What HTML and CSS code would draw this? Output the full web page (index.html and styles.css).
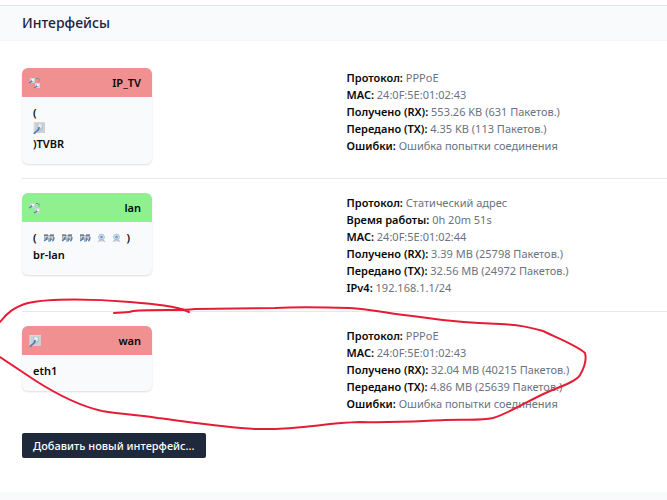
FILE: index.html
```
<!DOCTYPE html>
<html lang="ru">
<head>
<meta charset="utf-8">
<title>Интерфейсы</title>
<link rel="stylesheet" href="styles.css">
</head>
<body>
<svg class="defs" aria-hidden="true">
  <symbol id="port" viewBox="0 0 12 12">
    <rect x="1" y="0" width="11" height="11" fill="#ccd0d4"/>
    <path d="M1 11V0H12" fill="none" stroke="#dfe2e4"/>
    <path d="M4 2h6v5l-2 2H6L4 7z" fill="#bcc5ce"/>
    <circle cx="7" cy="4" r="2" fill="#e6edf4"/>
    <path d="M6 5Q6 8 4 9T1 12" fill="none" stroke="#4d7fb8" stroke-width="1.8"/>
  </symbol>
  <symbol id="bridge" viewBox="0 0 12 12">
    <path d="M1 1h5v5H1z" fill="#cfd2da"/>
    <path d="M6 6h5v5H6z" fill="#cfd2da"/>
    <path d="M4 2Q4 4 0 6M9 7Q9 9 5 11" fill="none" stroke="#557fb5" stroke-width="1.3"/>
    <path d="M7 1.5h3V5" fill="none" stroke="#6d86ad" stroke-dasharray="2 1"/>
    <path d="M3 2h2v2H3zM8 7h2v2H8z" fill="#eef1f5"/>
  </symbol>
  <symbol id="switch" viewBox="0 0 12 8">
    <path d="M1 1h10v5H1z" fill="#a9b0b8"/>
    <path d="M1 1h4M7 1h4" stroke="#4c5058"/>
    <path d="M2 3h2M5 3h2M8 4h2" stroke="#eef2f6"/>
    <path d="M1 7q3-1 3-4M5 7h2q1-1 1-3M9 7q2 0 2-4" fill="none" stroke="#4b7cae" stroke-width="1.2"/>
  </symbol>
  <symbol id="wifi" viewBox="0 0 10 10">
    <circle cx="5" cy="4" r="3.3" fill="#d3dfeb" stroke="#a9bfd6"/>
    <circle cx="5" cy="4" r="1.5" fill="#6e9bcb"/>
    <path d="M1 9l3-2h2l3 2" fill="#d0d5da" stroke="#a9b0b7"/>
  </symbol>
</svg>

<main class="page">
  <header class="section-head"><h3>Интерфейсы</h3></header>
  <section class="interfaces">
    <article class="iface">
      <div class="card">
        <div class="card-head down"><svg class="icon"><use href="#bridge"/></svg><span>IP_TV</span></div>
        <div class="card-body"><span>(</span><svg class="icon block"><use href="#port"/></svg><span>)TVBR</span></div>
      </div>
      <div class="details">
        <div><strong>Протокол:</strong> PPPoE</div>
        <div><strong>MAC:</strong> 24:0F:5E:01:02:43</div>
        <div><strong>Получено (RX):</strong> 553.26 KB (631 Пакетов.)</div>
        <div><strong>Передано (TX):</strong> 4.35 KB (113 Пакетов.)</div>
        <div><strong>Ошибки:</strong> Ошибка попытки соединения</div>
      </div>
    </article>
    <article class="iface">
      <div class="card">
        <div class="card-head up"><svg class="icon"><use href="#bridge"/></svg><span>lan</span></div>
        <div class="card-body">
          <div class="ports"><span>(</span><svg class="switch"><use href="#switch"/></svg><svg class="switch"><use href="#switch"/></svg><svg class="switch"><use href="#switch"/></svg><svg class="wifi"><use href="#wifi"/></svg><svg class="wifi"><use href="#wifi"/></svg><span>)</span></div>
          <span>br-lan</span>
        </div>
      </div>
      <div class="details">
        <div><strong>Протокол:</strong> Статический адрес</div>
        <div><strong>Время работы:</strong> 0h 20m 51s</div>
        <div><strong>MAC:</strong> 24:0F:5E:01:02:44</div>
        <div><strong>Получено (RX):</strong> 3.39 MB (25798 Пакетов.)</div>
        <div><strong>Передано (TX):</strong> 32.56 MB (24972 Пакетов.)</div>
        <div><strong>IPv4:</strong> 192.168.1.1/24</div>
      </div>
    </article>
    <article class="iface">
      <div class="card">
        <div class="card-head down"><svg class="icon"><use href="#port"/></svg><span>wan</span></div>
        <div class="card-body"><span>eth1</span></div>
      </div>
      <div class="details">
        <div><strong>Протокол:</strong> PPPoE</div>
        <div><strong>MAC:</strong> 24:0F:5E:01:02:43</div>
        <div><strong>Получено (RX):</strong> 32.04 MB (40215 Пакетов.)</div>
        <div><strong>Передано (TX):</strong> 4.86 MB (25639 Пакетов.)</div>
        <div><strong>Ошибки:</strong> Ошибка попытки соединения</div>
      </div>
    </article>
    <button class="add" type="button">Добавить новый интерфейс...</button>
  </section>
  <svg class="marker" viewBox="0 0 667 500" aria-hidden="true">
    <path d="M189 312C176 306 155 304 130 302C95 299 50 298 28 303C14 307 7 313 0 322M0 357C12 365 24 373 36 381C58 395 80 406 102 411C120 414 145 416 158 418C190 422 220 427 255 429C305 430 320 423 360 422C395 423 420 421 445 420C465 419 480 421 493 418C510 413 525 402 550 391C568 384 577 380 580 375C584 368 587 360 585 353C578 346 560 339 543 331C528 327 520 325 500 324C470 323 440 320 420 317C390 314 370 309 350 308C320 307 290 307 275 308L195 309C180 311 155 309 133 311C128 313 122 312 114 313"/>
  </svg>
</main>
</body>
</html>
```
FILE: styles.css
```
* { box-sizing: border-box; }

body {
  margin: 0;
  background: #f9fafc;
  color: #080808;
  font: 11px/17px "Noto Sans", sans-serif;
}

.defs { display: none; }

.page {
  position: relative;
  padding-top: 5px;
  background: #fff;
}

.section-head {
  padding: 7px 22px;
  border-top: 1px solid #e2e4ec;
  border-bottom: 1px solid #f3f4f7;
  background: #f9fafc;
}

h3 {
  margin: 0;
  color: #1b2340;
  font-size: 14px;
  font-weight: 500;
  line-height: 20px;
}

.interfaces { padding: 13px 0 34px 22px; }

.iface {
  display: grid;
  grid-template-columns: 1fr 1fr;
  column-gap: 4px;
  align-items: start;
  padding: 14px 0;
  border-bottom: 1px solid #e5e7ec;
}

.iface:nth-of-type(3) {
  padding-bottom: 20px;
  border-bottom: 0;
}

.card {
  width: 130px;
  overflow: hidden;
  border-radius: 6px;
  background: #f9fafc;
  box-shadow: 0 1px 2px #0002;
  font-weight: 600;
}

.card-head {
  display: flex;
  align-items: center;
  justify-content: space-between;
  height: 29px;
  padding: 0 11px 0 7px;
}

.down { background: #f09090; }
.up { background: #90f090; }

.icon { width: 12px; height: 12px; }

.block {
  display: block;
  margin: 1px 0;
}

.card-body { padding: 7px 11px 12px; }
.card-body > span { display: block; }

.ports {
  display: flex;
  align-items: center;
  gap: 6px;
}

.switch { width: 12px; height: 8px; }
.wifi { width: 9px; height: 10px; }

.details {
  padding: 1px 0;
  color: #6b7280;
}

strong {
  color: #080808;
  font-weight: 600;
}

.add {
  display: block;
  height: 25px;
  padding: 0 11px;
  border: 0;
  border-radius: 2px;
  background: #1e293b;
  color: #fff;
  font: inherit;
  font-weight: 500;
}

.marker {
  position: absolute;
  top: 0;
  left: 0;
  width: 100%;
  pointer-events: none;
}

.marker path {
  fill: none;
  stroke: #e51c35;
  stroke-width: 2;
  stroke-linecap: round;
}
```
